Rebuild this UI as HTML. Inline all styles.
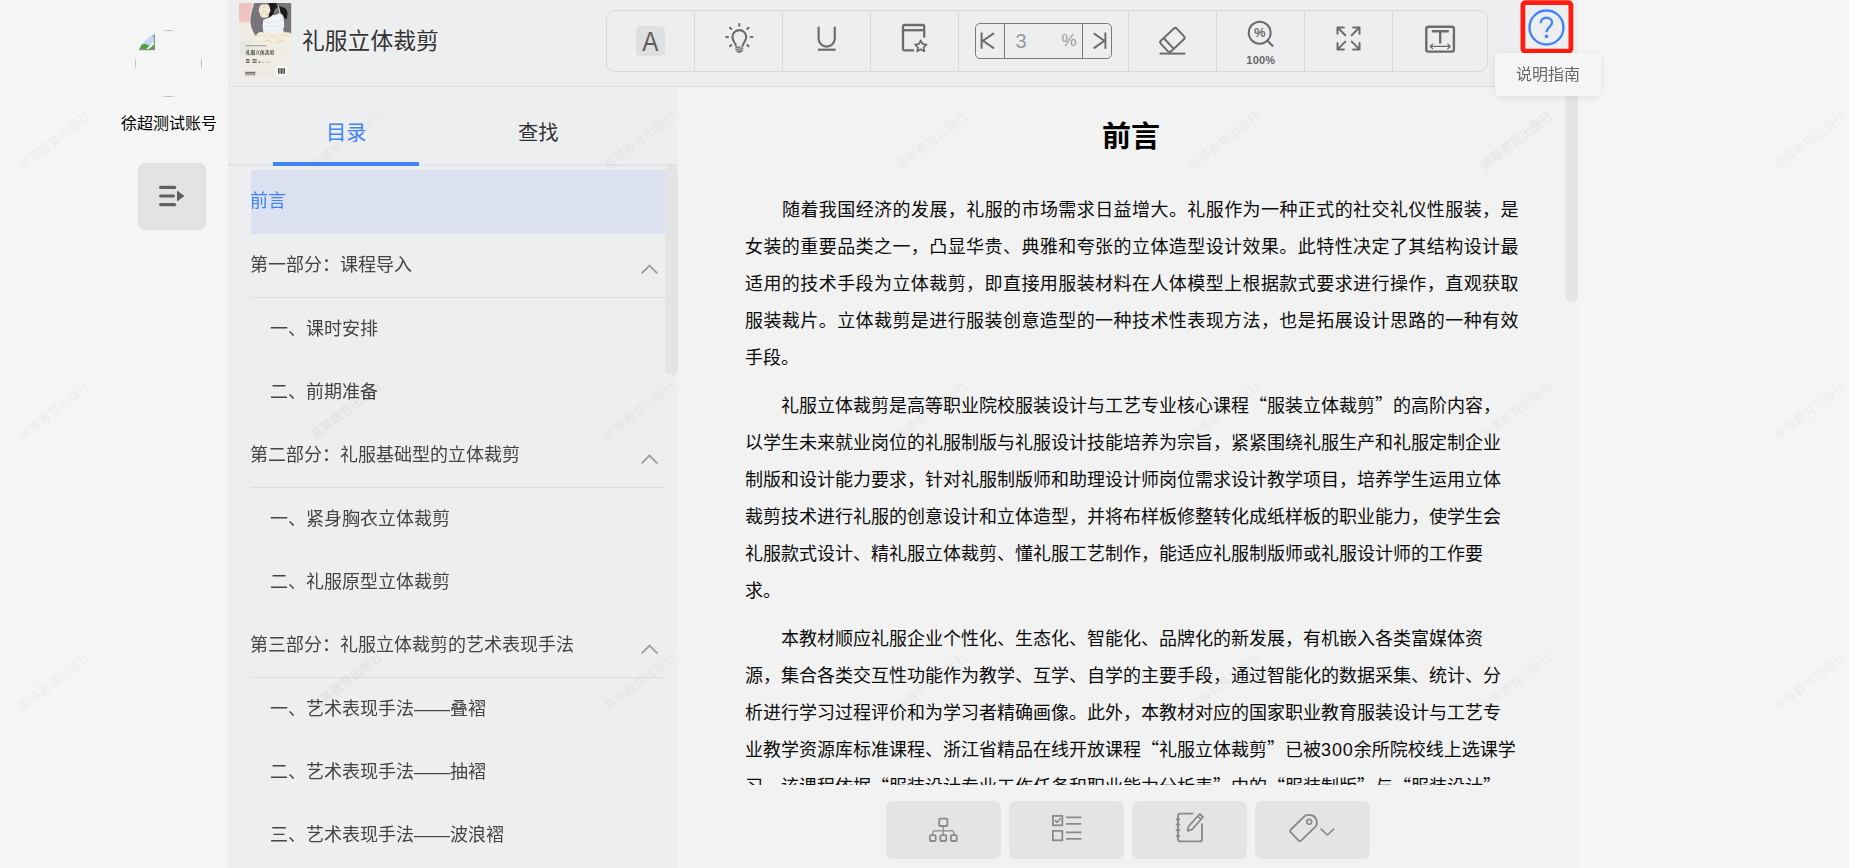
<!DOCTYPE html>
<html lang="zh-CN">
<head>
<meta charset="utf-8">
<title>礼服立体裁剪</title>
<style>
*{box-sizing:border-box;margin:0;padding:0}
html,body{width:1849px;height:868px;overflow:hidden}
body{position:relative;background:#f5f5f5;font-family:"Liberation Sans","Noto Sans CJK SC",sans-serif;color:#333}
.abs{position:absolute}
/* left user column */
#avatar{left:135px;top:30px;width:67px;height:67px;border-radius:50%;overflow:hidden}
#uname{left:69px;top:112px;width:200px;text-align:center;font-size:16px;line-height:24px;color:#000}
#menubtn{left:138px;top:163px;width:68px;height:67px;border-radius:7px;background:#e3e3e3}
/* header */
#header{left:228px;top:0;width:1350px;height:87px;background:#edeef0;border-bottom:1px solid #dfe0e2}
#cover{left:10.9px;top:3px;width:53px;height:76px;overflow:hidden}
#btitle{left:74px;top:23px;font-size:22.8px;line-height:36px;color:#333;white-space:nowrap}
#toolbar{left:378px;top:10px;width:882px;height:62px;border:1px solid #d9d9db;border-radius:9px}
.cell{position:absolute;top:0;height:60px;border-right:1px solid #d9d9db}
/* toc */
#toc{left:228px;top:87px;width:450px;height:781px;background:#edeef0;overflow:hidden}
#tabs{left:0;top:0;width:450px;height:79px}
.tab{position:absolute;top:31.4px;font-size:20.2px;line-height:30px;white-space:nowrap}
#tabline{left:0;top:77px;width:450px;height:2px;background:#e2e3e5}
#tabbar{left:45px;top:75px;width:146px;height:4px;background:#3f85f4}
.ti{position:absolute;left:23px;width:414px;font-size:18px;color:#444;white-space:nowrap}
.ti span{position:absolute;left:-1px;top:0;line-height:24px;will-change:transform}
.ti.sub span{left:19px}
.ti.part{border-bottom:1px solid #dcdde0}
.chev{position:absolute;left:389.6px;width:17px;height:10px}
#tocsb{left:437px;top:79px;width:13px;height:209.4px;background:#e4e4e5;border-radius:7px}
/* content */
#content{left:678px;top:87px;width:900px;height:781px;background:#f2f2f2;overflow:hidden}
#textclip{left:0;top:0;width:887px;height:698px;overflow:hidden}
#h1{left:0;top:28.5px;width:906px;text-align:center;font-size:29px;font-weight:bold;line-height:42px;color:#000;font-family:"Liberation Sans","Noto Sans CJK SC",sans-serif}
.p{position:absolute;left:67px;width:773.5px;font-size:18px;line-height:37px;color:#0c0c0c;text-indent:36px}
.p.j{text-align:justify}
.q{font-family:"Noto Sans CJK SC",sans-serif}
.p{text-spacing-trim:space-all}
.q{font-family:"Noto Sans CJK SC",sans-serif}
.p{text-spacing-trim:space-all}
.q{font-family:"Noto Sans CJK SC",sans-serif}
.p{text-spacing-trim:space-all}
.q{font-family:"Noto Sans CJK SC",sans-serif;line-height:0}
.p{text-spacing-trim:space-all}
#csb{left:887px;top:0;width:13px;height:215px;background:#e5e5e5;border-radius:7px}
.bb{position:absolute;top:714px;width:115px;height:58px;border-radius:7px;background:#e4e4e4}
/* help */
#tip{left:1495px;top:53px;width:106px;height:43px;border-radius:5px;background:#f5f5f5;box-shadow:0 1px 6px rgba(0,0,0,.10);font-size:16px;line-height:43px;text-align:center;color:#686868;will-change:transform}
.wm{position:absolute;width:120px;height:20px;margin-left:-60px;margin-top:-10px;text-align:center;font-size:12.4px;line-height:20px;font-weight:500;color:rgba(0,0,0,.055);transform:rotate(-38deg);white-space:nowrap;pointer-events:none}
</style>
</head>
<body>

<!-- user column -->
<!-- AVATAR -->
<div id="avatar" class="abs">
<svg width="67" height="67" viewBox="0 0 67 67">
<defs><clipPath id="ibox"><rect x="2" y="4" width="17.5" height="15.6"/></clipPath><clipPath id="avc"><circle cx="33.4" cy="33.4" r="32.6"/></clipPath>
<linearGradient id="mh" x1="0" x2="1"><stop offset="0" stop-color="#b8b8b8" stop-opacity="0"/><stop offset=".3" stop-color="#b8b8b8"/><stop offset=".7" stop-color="#b8b8b8"/><stop offset="1" stop-color="#b8b8b8" stop-opacity="0"/></linearGradient>
<linearGradient id="mv" x1="0" x2="0" y1="0" y2="1"><stop offset="0" stop-color="#b8b8b8" stop-opacity="0"/><stop offset=".3" stop-color="#b8b8b8"/><stop offset=".7" stop-color="#b8b8b8"/><stop offset="1" stop-color="#b8b8b8" stop-opacity="0"/></linearGradient></defs>
<rect x="25.5" y="0.1" width="16" height="1" fill="url(#mh)"/><rect x="25.5" y="66" width="16" height="1" fill="url(#mh)"/>
<rect x="0.1" y="25.5" width="1" height="16" fill="url(#mv)"/><rect x="66" y="25.5" width="1" height="16" fill="url(#mv)"/>
<g clip-path="url(#avc)">
<g clip-path="url(#ibox)">
<rect x="3" y="4" width="17" height="16" fill="#c3d8f6"/>
<ellipse cx="9.4" cy="20.5" rx="7" ry="6.6" fill="#4aa636"/>
<path d="M14 20 L19.5 13 V20Z" fill="#4aa636"/>
<path d="M10.4 21 L20.6 11.4" stroke="#f5f5f5" stroke-width="1.9"/>
</g>
<path d="M19.5 4 V19.6 H2" fill="none" stroke="#8f8f8f" stroke-width="1.1"/>
<path d="M16 4.5 L19 7.5" stroke="#8f8f8f" stroke-width="1"/>
</g>
</svg>
</div>
<!-- /AVATAR -->
<div id="uname" class="abs">徐超测试账号</div>
<div id="menubtn" class="abs">
<svg class="abs" style="left:20px;top:21px" width="28" height="24" viewBox="0 0 28 24">
<g stroke="#606060" stroke-width="3.2" stroke-linecap="round"><path d="M2.6 3.4H16.6M2.6 12H15.4M2.6 20.6H16.6"/></g>
<path d="M19 6.5L26.5 12L19 17.5Z" fill="#606060"/>
</svg>
</div>

<!-- header -->
<div id="header" class="abs">
<!-- COVER -->
<div id="cover" class="abs">
<svg width="53" height="76" viewBox="0 0 53 76">
<defs><filter id="bl" x="-5%" y="-5%" width="110%" height="110%"><feGaussianBlur stdDeviation="0.5"/></filter>
<filter id="bl2" x="-5%" y="-5%" width="110%" height="110%"><feGaussianBlur stdDeviation="0.9"/></filter>
<filter id="bl3" x="-5%" y="-20%" width="110%" height="140%"><feGaussianBlur stdDeviation="0.28"/></filter>
<clipPath id="cvc"><rect x="0" y="0" width="52.2" height="75.7"/></clipPath>
<clipPath id="circ"><path d="M15.6 -1 C12.6 8 11 14 11.5 20 C12.2 26 14.6 30.6 17.8 33.9 C21.6 37.6 27 42.8 34 43.2 C41 43.4 48 40 53 35 V-1 Z"/></clipPath></defs>
<g clip-path="url(#cvc)">
<rect width="53" height="76" fill="#efece5"/>
<g filter="url(#bl2)">
<path d="M-2 -2 H15.5 L12.4 10 V19 H-2Z" fill="#f0c3be"/>
<ellipse cx="6" cy="45" rx="6" ry="8" fill="#e4e7dd"/>
<ellipse cx="44" cy="58" rx="10" ry="8" fill="#f2ede7"/>
</g>
<path d="M15 -1 C12 8 10.4 14 10.9 20 C11.6 26.4 14 31 17.4 34.4 C21.2 38.2 26.8 43.5 34 43.9 C41.4 44.1 48.4 40.6 53 35.8 V-1 Z" fill="#f7f5f0"/>
<g clip-path="url(#circ)"><g filter="url(#bl)">
<rect x="8" y="-3" width="48" height="50" fill="#77747a"/>
<path d="M29.2 -1 H37.6 V3.4 C39.6 3.2 44 3.6 46.6 5.6 C49 8 49 13 47.4 16.6 L41.6 12.4 L39.8 3.6 L36 6 L33.6 12.4 L30.4 14.6 C29.6 10 29.8 6 30.6 3.4 Z" fill="#1c1c1f"/>
<path d="M39.4 3 L41.2 10.4" stroke="#ececef" stroke-width="0.9"/>
<path d="M30.7 14.4 L33.7 11.9 C36 12.6 38.6 11.4 40.6 9.9 C42.6 10.6 44 12 44.6 13.9 L45.2 22.8 L43 31.5 H24.6 L23.6 22.8 L24.3 16.8 Z" fill="#f1f3f6"/>
<path d="M25 18.4 C31 20.4 38 19.4 44.4 16.6 M24.2 22.6 C31 24.6 38 23.8 45 21.2 M24.4 27 C31 29 38 28 44 25.6" stroke="#dde1e7" stroke-width="0.7" fill="none"/>
<path d="M20 6 C20 2.5 23 0.6 25.6 1.4 C28 0.8 30.8 2.4 30.8 5 C32 7.4 31 10 29.6 11 C30 13.4 27.6 15.4 25.4 14.6 C22.6 15.2 20.6 13 21 10.6 C19.6 9.4 19.4 7.4 20 6 Z" fill="#f1e9d6"/>
<path d="M23 5 C24 3.4 26.4 3.4 27.4 5 M22.4 9.4 C24 8 26.4 8.4 27.6 10 M26 12.4 C27 11 28.6 11 29.4 12" stroke="#d9ccae" stroke-width="0.7" fill="none"/>
<path d="M17 33.6 C17.6 29.6 22 27.6 25.6 30.4 C28.6 27.8 33.4 28.6 35.4 31 C38 28 43.4 27 46.6 29.6 C49.6 28.4 53.4 30.4 54 34 V46 H17 Z" fill="#f4eddd"/>
<path d="M19 34 C21 31.6 24 32 26 34 M30 35.4 C32 32.6 36 32.6 38 35.4 M42 32.6 C45 30.8 49 31.6 50 34.6 M24 39 C27 37 31 37.4 33 40 M37 39.6 C40 37.6 44 37.6 46 39.6" stroke="#ddd0b4" stroke-width="0.8" fill="none"/>
</g></g>
<g filter="url(#bl)">
<rect x="6.9" y="42.1" width="21" height="1.2" fill="#a6a49e"/>
<rect x="6.9" y="56" width="3.6" height="1.5" fill="#66635f"/><rect x="13.4" y="56" width="4.4" height="1.5" fill="#77746f"/>
<rect x="6.9" y="58.5" width="4" height="1.5" fill="#77746f"/><rect x="13.4" y="58.5" width="4.4" height="1.5" fill="#77746f"/>
<rect x="19.8" y="58.4" width="1.4" height="1.6" fill="#55524f"/><rect x="23.4" y="58.6" width="1.3" height="1.3" fill="#aaa7a1"/><rect x="26.4" y="58.6" width="1.3" height="1.3" fill="#aaa7a1"/><rect x="29.4" y="58.6" width="1.3" height="1.3" fill="#aaa7a1"/>
<rect x="37.4" y="63.2" width="10.6" height="9.6" fill="#fbfbfa"/>
<path d="M39.6 65.2V70.8M41 65.2V70.8M42.6 65.2V70.8M44 65.2V70.8M45.4 65.2V70.8" stroke="#222" stroke-width="0.9"/>
<rect x="6.4" y="68.8" width="9.8" height="3.4" fill="#6a6a6a"/>
<path d="M7.2 70.4H15.4M7.2 71.4H15.4" stroke="#e9e6df" stroke-width="0.5"/>
</g>
<text filter="url(#bl3)" x="6.7" y="50.7" font-family="Noto Serif CJK SC, serif" font-weight="bold" font-size="4.75" fill="#2e2c2a" textLength="28.6" lengthAdjust="spacingAndGlyphs">礼服立体裁剪</text>
</g>
</svg>
</div>
<!-- /COVER -->
<div id="btitle" class="abs">礼服立体裁剪</div>
<div id="toolbar" class="abs">
<div class="cell" style="left:0;width:88px"></div>
<div class="cell" style="left:88px;width:88px"></div>
<div class="cell" style="left:176px;width:88px"></div>
<div class="cell" style="left:264px;width:88px"></div>
<div class="cell" style="left:352px;width:170px"></div>
<div class="cell" style="left:522px;width:88px"></div>
<div class="cell" style="left:610px;width:88px"></div>
<div class="cell" style="left:698px;width:88px"></div>
<!-- TOOLBAR-ICONS -->
<svg class="abs" style="left:23px;top:9px" width="42" height="42" viewBox="630 20 42 42"><rect x="636" y="26" width="29" height="30" rx="5" fill="#dedfe1"/><text x="650.4" y="51.2" text-anchor="middle" font-family="Liberation Sans, sans-serif" font-size="27.5" fill="#5c5c5c" transform="translate(650.4 0) scale(0.88 1) translate(-650.4 0)">A</text></svg>
<svg class="abs" style="left:115px;top:9px" width="36" height="36" viewBox="722 20 36 36"><path d="M739.30 25.70L739.30 23.90M731.31 29.01L730.04 27.74M747.29 29.01L748.56 27.74M728.00 37.00L726.20 37.00M750.60 37.00L752.40 37.00M731.31 44.99L730.04 46.26M747.29 44.99L748.56 46.26" stroke="#6c6c6c" stroke-width="2" stroke-linecap="round" fill="none"/><path d="M736 46.2 C736 43 732.4 41.6 732.4 37 A6.9 6.9 0 0 1 746.2 37 C746.2 41.6 742.6 43 742.6 46.2" fill="none" stroke="#6c6c6c" stroke-width="2.1"/><path d="M735.4 46.6 H743.2 V49.6 C743.2 51.6 741.6 52.8 739.3 52.8 C737 52.8 735.4 51.6 735.4 49.6 Z" fill="#6c6c6c"/><path d="M735.4 48.6 L743.2 47.6 M735.4 50.6 L743.2 49.6" stroke="#edeef0" stroke-width="0.7"/></svg>
<svg class="abs" style="left:205px;top:11px" width="30" height="32" viewBox="812 22 30 32"><path d="M818.6 26.8 V38.6 A8.1 8.1 0 0 0 834.8 38.6 V26.8" fill="none" stroke="#6c6c6c" stroke-width="2.2"/><path d="M818 49.7 H835.6" stroke="#6c6c6c" stroke-width="2.2"/></svg>
<svg class="abs" style="left:291px;top:9px" width="34" height="36" viewBox="898 20 34 36"><path d="M914 50.4 H904.6 Q903 50.4 903 48.8 V26.6 Q903 25 904.6 25 H922.6 Q924.2 25 924.2 26.6 V37.4" fill="none" stroke="#6c6c6c" stroke-width="2.3"/><path d="M903 30.2 H924.2" stroke="#6c6c6c" stroke-width="2.3"/><path d="M920.80 40.40L922.56 43.97L926.51 44.55L923.65 47.33L924.33 51.25L920.80 49.40L917.27 51.25L917.95 47.33L915.09 44.55L919.04 43.97Z" fill="none" stroke="#6c6c6c" stroke-width="1.8" stroke-linejoin="round"/></svg>
<svg class="abs" style="left:363px;top:7px" width="148" height="46" viewBox="970 18 148 46"><rect x="975.5" y="23.5" width="136" height="35" rx="4.5" fill="none" stroke="#7a7a7a" stroke-width="1"/><path d="M1004.5 23.5V58.5M1082.5 23.5V58.5" stroke="#7a7a7a" stroke-width="1"/><path d="M981.6 32.6V48.8M994 33.2L983 40.7L994 48.4" fill="none" stroke="#6c6c6c" stroke-width="2"/><path d="M1105.4 32.6V48.8M1093.6 33.2L1104.4 40.7L1093.6 48.4" fill="none" stroke="#6c6c6c" stroke-width="2"/><text x="1015.4" y="48" font-family="Liberation Sans, sans-serif" font-size="20" fill="#999">3</text><text x="1061.4" y="46.4" font-family="Liberation Sans, sans-serif" font-size="17" fill="#999">%</text></svg>
<svg class="abs" style="left:547px;top:9px" width="38" height="38" viewBox="1154 20 38 38"><g transform="rotate(-43 1172.4 40)"><rect x="1161.4" y="32.6" width="22" height="14.8" rx="2.4" fill="none" stroke="#6c6c6c" stroke-width="2"/><path d="M1167.4 32.6V47.4" stroke="#6c6c6c" stroke-width="2"/></g><path d="M1159.6 53.6H1185.4" stroke="#6c6c6c" stroke-width="2"/></svg>
<svg class="abs" style="left:633px;top:5px" width="44" height="52" viewBox="1240 16 44 52"><circle cx="1259.7" cy="32.7" r="11" fill="none" stroke="#6c6c6c" stroke-width="2"/><path d="M1267.4 40.6L1272.4 45.8" stroke="#6c6c6c" stroke-width="2.2" stroke-linecap="round"/><text x="1259.7" y="37.4" text-anchor="middle" font-family="Liberation Sans, sans-serif" font-size="13" font-weight="bold" fill="#6c6c6c">%</text><text x="1260.8" y="64.4" text-anchor="middle" font-family="Liberation Sans, sans-serif" font-size="11" font-weight="bold" fill="#666" letter-spacing="0.2">100%</text></svg>
<svg class="abs" style="left:725px;top:11px" width="34" height="34" viewBox="1332 22 34 34"><path d="M1345.3 35.199999999999996L1337.5 27.4M1343.9 27.4H1337.5V33.8M1351.7 35.199999999999996L1359.5 27.4M1353.1 27.4H1359.5V33.8M1345.3 41.6L1337.5 49.4M1343.9 49.4H1337.5V43.0M1351.7 41.6L1359.5 49.4M1353.1 49.4H1359.5V43.0" fill="none" stroke="#6c6c6c" stroke-width="2" stroke-linecap="round" stroke-linejoin="round"/></svg>
<svg class="abs" style="left:813px;top:9px" width="40" height="38" viewBox="1420 20 40 38"><rect x="1426.3" y="26.8" width="27.6" height="24.8" rx="2" fill="none" stroke="#6c6c6c" stroke-width="2.4"/><path d="M1431.8 31.2H1448.8M1440.2 31.2V43.6" stroke="#6c6c6c" stroke-width="2.4"/><path d="M1430.4 46.4H1450M1433 43.8L1430.2 46.4L1433 49M1447.4 43.8L1450.2 46.4L1447.4 49" fill="none" stroke="#6c6c6c" stroke-width="1.2"/></svg>
<!-- /TOOLBAR-ICONS -->
</div>
</div>

<!-- toc -->
<div id="toc" class="abs">
<div id="tabs" class="abs">
<div class="tab" style="left:98px;color:#3f85f4">目录</div>
<div class="tab" style="left:290px;color:#333">查找</div>
<div id="tabline" class="abs"></div>
<div id="tabbar" class="abs"></div>
</div>
<!-- TOC-ITEMS -->
<div class="ti" style="top:83.30px;height:63.90px;background:#dbe1f1;color:#3f83f8"><span style="top:18.70px">前言</span></div>
<div class="ti part" style="top:146.50px;height:64.50px"><span style="top:19.50px">第一部分：课程导入</span><svg class="chev" style="top:30.6px" viewBox="0 0 17 10"><path d="M1.2 8.9L8.5 1.5L15.8 8.9" fill="none" stroke="#9e9e9f" stroke-width="1.9" stroke-linecap="round"/></svg></div>
<div class="ti sub" style="top:211.00px;height:62.75px"><span style="top:19.00px">一、课时安排</span></div>
<div class="ti sub" style="top:273.75px;height:62.75px"><span style="top:19.25px">二、前期准备</span></div>
<div class="ti part" style="top:336.50px;height:64.50px"><span style="top:19.50px">第二部分：礼服基础型的立体裁剪</span><svg class="chev" style="top:30.6px" viewBox="0 0 17 10"><path d="M1.2 8.9L8.5 1.5L15.8 8.9" fill="none" stroke="#9e9e9f" stroke-width="1.9" stroke-linecap="round"/></svg></div>
<div class="ti sub" style="top:401.00px;height:62.75px"><span style="top:19.00px">一、紧身胸衣立体裁剪</span></div>
<div class="ti sub" style="top:463.75px;height:62.75px"><span style="top:19.25px">二、礼服原型立体裁剪</span></div>
<div class="ti part" style="top:526.50px;height:64.50px"><span style="top:19.50px">第三部分：礼服立体裁剪的艺术表现手法</span><svg class="chev" style="top:30.6px" viewBox="0 0 17 10"><path d="M1.2 8.9L8.5 1.5L15.8 8.9" fill="none" stroke="#9e9e9f" stroke-width="1.9" stroke-linecap="round"/></svg></div>
<div class="ti sub" style="top:591.00px;height:62.75px"><span style="top:19.00px">一、艺术表现手法——叠褶</span></div>
<div class="ti sub" style="top:653.75px;height:62.75px"><span style="top:19.25px">二、艺术表现手法——抽褶</span></div>
<div class="ti sub" style="top:716.50px;height:62.75px"><span style="top:19.50px">三、艺术表现手法——波浪褶</span></div>
<!-- /TOC-ITEMS -->
<div id="tocsb" class="abs"></div>
</div>

<!-- content -->
<div id="content" class="abs">
<div id="textclip" class="abs">
<div id="h1" class="abs">前言</div>
<!-- PARAS -->
<p class="p j" style="top:104.5px;text-indent:37px">随着我国经济的发展，礼服的市场需求日益增大。礼服作为一种正式的社交礼仪性服装，是女装的重要品类之一，凸显华贵、典雅和夸张的立体造型设计效果。此特性决定了其结构设计最适用的技术手段为立体裁剪，即直接用服装材料在人体模型上根据款式要求进行操作，直观获取服装裁片。立体裁剪是进行服装创意造型的一种技术性表现方法，也是拓展设计思路的一种有效手段。</p>
<p class="p" style="top:300.5px">礼服立体裁剪是高等职业院校服装设计与工艺专业核心课程<span class="q">“</span>服装立体裁剪<span class="q">”</span>的高阶内容，以学生未来就业岗位的礼服制版与礼服设计技能培养为宗旨，紧紧围绕礼服生产和礼服定制企业制版和设计能力要求，针对礼服制版师和助理设计师岗位需求设计教学项目，培养学生运用立体裁剪技术进行礼服的创意设计和立体造型，并将布样板修整转化成纸样板的职业能力，使学生会礼服款式设计、精礼服立体裁剪、懂礼服工艺制作，能适应礼服制版师或礼服设计师的工作要求。</p>
<p class="p" style="top:533.5px">本教材顺应礼服企业个性化、生态化、智能化、品牌化的新发展，有机嵌入各类富媒体资源，集合各类交互性功能作为教学、互学、自学的主要手段，通过智能化的数据采集、统计、分析进行学习过程评价和为学习者精确画像。此外，本教材对应的国家职业教育服装设计与工艺专业教学资源库标准课程、浙江省精品在线开放课程<span class="q">“</span>礼服立体裁剪<span class="q">”</span>已被<span style="letter-spacing:.9px">300</span>余所院校线上选课学习。该课程依据<span class="q">“</span>服装设计专业工作任务和职业能力分析表<span class="q">”</span>中的<span class="q">“</span>服装制版<span class="q">”</span>与<span class="q">“</span>服装设计<span class="q">”</span>两个岗位的职业能力要求，结合礼服企业的实际生产流程设计教学内容。</p>
<!-- /PARAS -->
</div>
<div id="csb" class="abs"></div>
<!-- BOTTOM-BTNS -->
<div class="bb" style="left:208px"></div>
<div class="bb" style="left:331px"></div>
<div class="bb" style="left:454px"></div>
<div class="bb" style="left:577px"></div>
<svg class="abs" style="left:246px;top:725px" width="40" height="36" viewBox="924 812 40 36"><rect x="939.2" y="818.6" width="8.2" height="7.4" rx="1" fill="none" stroke="#8a8a8a" stroke-width="1.8"/><path d="M943.3 826V835M932.8 835V832.4Q932.8 830.8 934.4 830.8H952.2Q953.8 830.8 953.8 832.4V835" fill="none" stroke="#8a8a8a" stroke-width="1.2"/><rect x="929.9" y="835.2" width="5.8" height="5.8" rx="1" fill="none" stroke="#8a8a8a" stroke-width="1.8"/><rect x="940.4" y="835.2" width="5.8" height="5.8" rx="1" fill="none" stroke="#8a8a8a" stroke-width="1.8"/><rect x="950.9" y="835.2" width="5.8" height="5.8" rx="1" fill="none" stroke="#8a8a8a" stroke-width="1.8"/></svg>
<svg class="abs" style="left:370px;top:723px" width="40" height="36" viewBox="1048 810 40 36"><rect x="1052.9" y="815.9" width="9.4" height="9.4" fill="none" stroke="#8a8a8a" stroke-width="1.8"/><path d="M1054.8 820L1057 822.4L1060.6 818.2" fill="none" stroke="#8a8a8a" stroke-width="1.6"/><rect x="1052.9" y="830.9" width="9.4" height="9.4" fill="none" stroke="#8a8a8a" stroke-width="1.8"/><path d="M1066 817.4H1081.4M1066 823.8H1081.4M1066 832.4H1081.4M1066 838.8H1081.4" stroke="#8a8a8a" stroke-width="1.8"/></svg>
<svg class="abs" style="left:494px;top:721px" width="36" height="38" viewBox="1172 808 36 38"><path d="M1193.4 813.6H1180.4Q1178 813.6 1178 816V839Q1178 841.4 1180.4 841.4H1199.6Q1202 841.4 1202 839V823.4" fill="none" stroke="#8a8a8a" stroke-width="1.9"/><path d="M1175.8 819.4H1180.2M1175.8 824.7H1180.2M1175.8 830.1H1180.2M1175.8 836H1180.2" stroke="#8a8a8a" stroke-width="1.7"/><path d="M1199.6 814L1203 817L1192.2 829.4L1187.6 830.8L1188.6 826.4Z" fill="none" stroke="#8a8a8a" stroke-width="1.8" stroke-linejoin="round"/><path d="M1197.6 816.2L1201 819.2" stroke="#8a8a8a" stroke-width="1.4"/></svg>
<svg class="abs" style="left:608px;top:723px" width="52" height="36" viewBox="1286 810 52 36"><path d="M1305.2 815.6L1290.6 829.8Q1289.6 831 1290.6 832.2L1298.6 840.6Q1299.8 841.6 1301 840.6L1315.8 826.4Q1317.8 823.6 1316.2 819.4Q1314.4 815 1309.8 815Q1307 814.6 1305.2 815.6Z" fill="none" stroke="#8a8a8a" stroke-width="1.9" stroke-linejoin="round"/><circle cx="1309.2" cy="821.8" r="2.4" fill="none" stroke="#8a8a8a" stroke-width="1.6"/><path d="M1320.6 828.6L1327.4 835L1334.2 828.6" fill="none" stroke="#8a8a8a" stroke-width="1.6"/></svg>
<!-- /BOTTOM-BTNS -->
</div>

<!-- help -->
<svg id="help" class="abs" style="left:1516px;top:0" width="62" height="58" viewBox="1516 0 62 58">
<rect x="1522.9" y="2.7" width="48" height="48.5" rx="2.6" fill="none" stroke="#ff1c0e" stroke-width="4.8"/>
<circle cx="1546.5" cy="27.5" r="17" fill="none" stroke="#4486fa" stroke-width="2.4"/>
<path d="M1540.7 23.2 C1540.7 19.6 1543.3 17.8 1546.5 17.8 C1549.8 17.8 1552.1 19.8 1552.1 22.6 C1552.1 26.6 1546.6 27.2 1546.4 32.2" fill="none" stroke="#4486fa" stroke-width="2.4"/>
<rect x="1544.8" y="34.8" width="3.3" height="3.3" rx="0.8" fill="#4486fa"/>
</svg>
<div id="tip" class="abs">说明指南</div>

<!-- WATERMARKS -->
<div class="wm" style="left:54.5px;top:141px">高等教育出版社</div>
<div class="wm" style="left:347.0px;top:141px">高等教育出版社</div>
<div class="wm" style="left:639.5px;top:141px">高等教育出版社</div>
<div class="wm" style="left:932.0px;top:141px">高等教育出版社</div>
<div class="wm" style="left:1224.5px;top:141px">高等教育出版社</div>
<div class="wm" style="left:1517.0px;top:141px">高等教育出版社</div>
<div class="wm" style="left:1809.5px;top:141px">高等教育出版社</div>
<div class="wm" style="left:54.5px;top:411.2px">高等教育出版社</div>
<div class="wm" style="left:347.0px;top:411.2px">高等教育出版社</div>
<div class="wm" style="left:639.5px;top:411.2px">高等教育出版社</div>
<div class="wm" style="left:932.0px;top:411.2px">高等教育出版社</div>
<div class="wm" style="left:1224.5px;top:411.2px">高等教育出版社</div>
<div class="wm" style="left:1517.0px;top:411.2px">高等教育出版社</div>
<div class="wm" style="left:1809.5px;top:411.2px">高等教育出版社</div>
<div class="wm" style="left:54.5px;top:681.5px">高等教育出版社</div>
<div class="wm" style="left:347.0px;top:681.5px">高等教育出版社</div>
<div class="wm" style="left:639.5px;top:681.5px">高等教育出版社</div>
<div class="wm" style="left:932.0px;top:681.5px">高等教育出版社</div>
<div class="wm" style="left:1224.5px;top:681.5px">高等教育出版社</div>
<div class="wm" style="left:1517.0px;top:681.5px">高等教育出版社</div>
<div class="wm" style="left:1809.5px;top:681.5px">高等教育出版社</div>
<!-- /WATERMARKS -->
</body>
</html>
